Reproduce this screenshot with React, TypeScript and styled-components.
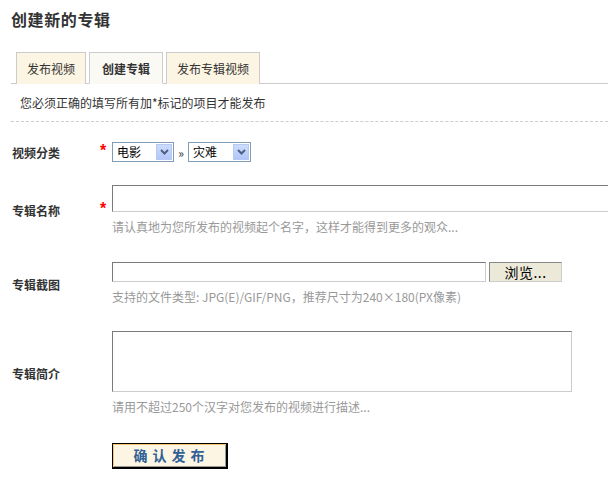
import React from "react";
import styled, { createGlobalStyle } from "styled-components";

const Global = createGlobalStyle`
  html, body { margin: 0; padding: 0; background: #fff; }
  body { font-family: "Noto Sans CJK SC", "Liberation Sans", sans-serif; font-size: 12px; color: #333; }
  * { box-sizing: border-box; }
`;

const Page = styled.div`
  width: 608px;
  height: 496px;
  padding-left: 11px;
  overflow: hidden;
`;

const Title = styled.h1`
  margin: 0;
  padding-top: 9px;
  height: 52px;
  font-size: 16px;
  line-height: 20px;
  font-weight: bold;
  letter-spacing: 0.6px;
  color: #333;
`;

const TabBar = styled.div`
  display: flex;
  gap: 3px;
  padding-left: 5px;
  border-bottom: 1px solid #cccccc;
  height: 32px;
`;

const Tab = styled.div<{ $active?: boolean; $w: number }>`
  width: ${(p) => p.$w}px;
  height: 32px;
  border: 1px solid #cccccc;
  border-bottom: ${(p) => (p.$active ? "1px solid #fbf9f3" : "none")};
  background: ${(p) => (p.$active ? "#fbf9f3" : "#fdf5e3")};
  font-weight: ${(p) => (p.$active ? "bold" : "normal")};
  font-size: 12px;
  line-height: 31px;
  text-align: center;
  color: #333;
`;

const Notice = styled.div`
  padding-left: 9px;
  height: 38px;
  line-height: 38px;
  font-size: 12px;
  color: #333;
  border-bottom: 1px dashed #cccccc;
`;

const Row = styled.div<{ $top: number }>`
  display: grid;
  grid-template-columns: 89px 12px 1fr;
  align-items: center;
  margin-top: ${(p) => p.$top}px;
`;

const Label = styled.div`
  padding-left: 1px;
  font-size: 12px;
  font-weight: bold;
  color: #333;
`;

const Star = styled.span`
  color: #ff0000;
  font-family: "Liberation Sans", sans-serif;
  font-weight: bold;
  font-size: 16px;
  line-height: 16px;
  height: 16px;
  display: block;
  margin-top: -3px;
`;

const Field = styled.div`
  display: flex;
  flex-direction: column;
  align-items: flex-start;
`;

const Line = styled.div`
  display: flex;
  align-items: center;
`;

const Hint = styled.div`
  margin-top: 6px;
  line-height: 18px;
  font-size: 12px;
  color: #999;
  white-space: nowrap;
`;

const SelectBox = styled.div<{ $w: number }>`
  width: ${(p) => p.$w}px;
  height: 20px;
  border: 1px solid #7f9db9;
  background: #fff;
  display: flex;
  align-items: center;
  justify-content: space-between;
  padding: 1px;
  font-size: 12px;
  color: #000;
`;

const SelectText = styled.span`
  padding-left: 3px;
  line-height: 16px;
`;

const SelectArrow = styled.span`
  width: 16px;
  height: 16px;
  background: linear-gradient(#cddcfd, #b2c6f8);
  border: 1px solid #b6c9f3;
  display: flex;
  align-items: center;
  justify-content: center;
`;

const Sep = styled.span`
  width: 14px;
  text-align: center;
  font-size: 12px;
  color: #333;
`;

const TextInput = styled.div<{ $w: number; $h: number }>`
  width: ${(p) => p.$w}px;
  height: ${(p) => p.$h}px;
  border-top: 1px solid #7a7a7a;
  border-left: 1px solid #7a7a7a;
  border-bottom: 1px solid #cccccc;
  border-right: 1px solid #cccccc;
  background: #fff;
  flex-shrink: 0;
`;

const Browse = styled.div`
  margin-left: 3px;
  width: 73px;
  height: 20px;
  background: #ece9d8;
  border-top: 1px solid #888;
  border-left: 1px solid #888;
  border-bottom: 1px solid #ccc;
  border-right: 1px solid #ccc;
  font-size: 14px;
  line-height: 18px;
  text-align: center;
  color: #000;
  letter-spacing: 0.5px;
`;

const Submit = styled.div`
  width: 116px;
  height: 26px;
  border: 1px solid #000;
  border-right-width: 2px;
  border-bottom-width: 2px;
  box-shadow: inset 1px 1px 0 #f6c76c, inset -1px -1px 0 #9a9a9a;
  background: #fdf5e4;
  color: #2f6096;
  font-weight: bold;
  font-size: 14px;
  line-height: 23px;
  letter-spacing: 5px;
  text-align: center;
  padding-left: 4px;
`;

const Chevron = () => (
  <svg width="9" height="6" viewBox="0 0 9 6">
    <path d="M1 1 L4.5 4.5 L8 1" fill="none" stroke="#4d6185" strokeWidth="2" />
  </svg>
);

const Select = ({ w, text }: { w: number; text: string }) => (
  <SelectBox $w={w}>
    <SelectText>{text}</SelectText>
    <SelectArrow>
      <Chevron />
    </SelectArrow>
  </SelectBox>
);

export default function App() {
  return (
    <>
      <Global />
      <Page>
        <Title>创建新的专辑</Title>
        <TabBar>
          <Tab $w={70}>发布视频</Tab>
          <Tab $w={74} $active>
            创建专辑
          </Tab>
          <Tab $w={94}>发布专辑视频</Tab>
        </TabBar>
        <Notice>您必须正确的填写所有加*标记的项目才能发布</Notice>

        <Row $top={20}>
          <Label>视频分类</Label>
          <Star>*</Star>
          <Line>
            <Select w={62} text="电影" />
            <Sep>»</Sep>
            <Select w={63} text="灾难" />
          </Line>
        </Row>

        <Row $top={23}>
          <Label>专辑名称</Label>
          <Star>*</Star>
          <Field>
            <TextInput $w={520} $h={27} />
            <Hint>请认真地为您所发布的视频起个名字，这样才能得到更多的观众...</Hint>
          </Field>
        </Row>

        <Row $top={26}>
          <Label>专辑截图</Label>
          <span />
          <Field>
            <Line>
              <TextInput $w={374} $h={20} />
              <Browse>浏览...</Browse>
            </Line>
            <Hint>支持的文件类型: JPG(E)/GIF/PNG，推荐尺寸为240×180(PX像素)</Hint>
          </Field>
        </Row>

        <Row $top={25}>
          <Label>专辑简介</Label>
          <span />
          <Field>
            <TextInput $w={460} $h={61} />
            <Hint>请用不超过250个汉字对您发布的视频进行描述...</Hint>
          </Field>
        </Row>

        <Row $top={27}>
          <span />
          <span />
          <Submit>确认发布</Submit>
        </Row>
      </Page>
    </>
  );
}
